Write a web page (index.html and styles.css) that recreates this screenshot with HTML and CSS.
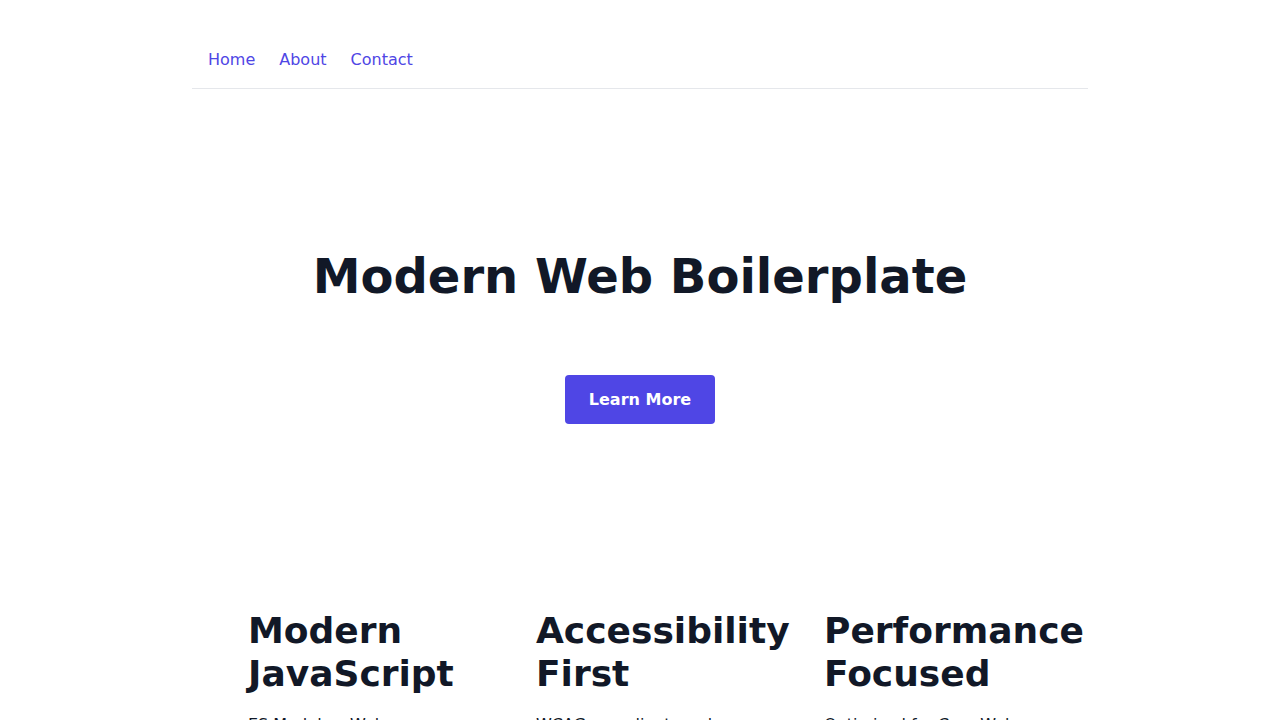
FILE: index.html
```html
<!DOCTYPE html>
<html lang="en">
<head>
<meta charset="utf-8">
<title>Modern Web Boilerplate</title>
<link rel="stylesheet" href="styles.css">
</head>
<body>
<div class="container">
  <header class="site-header">
    <nav class="nav">
      <a href="#">Home</a>
      <a href="#">About</a>
      <a href="#">Contact</a>
    </nav>
  </header>
  <main>
    <section class="hero">
      <h1>Modern Web Boilerplate</h1>
      <a class="btn" href="#">Learn More</a>
    </section>
    <section class="features">
      <article class="feature">
        <h2>Modern JavaScript</h2>
        <p>ES Modules, Web Components, and modern APIs</p>
      </article>
      <article class="feature">
        <h2>Accessibility First</h2>
        <p>WCAG compliant markup with semantic HTML</p>
      </article>
      <article class="feature">
        <h2>Performance Focused</h2>
        <p>Optimized for Core Web Vitals and fast loading</p>
      </article>
    </section>
  </main>
</div>
</body>
</html>
```
FILE: styles.css
```css
* { box-sizing: border-box; }
html, body { margin: 0; padding: 0; }
body {
  font-family: "DejaVu Sans", sans-serif;
  color: #111827;
  background: #fff;
  font-size: 16px;
  line-height: 1.5;
}
.container {
  max-width: 896px;
  margin: 0 auto;
}
.site-header {
  border-bottom: 1px solid #e5e7eb;
  padding: 48px 16px 16px;
}
.nav {
  display: flex;
  gap: 24px;
}
.nav a {
  color: #4f46e5;
  text-decoration: none;
  font-size: 16px;
  line-height: 24px;
}
.hero {
  text-align: center;
  padding: 159px 16px 0;
}
.hero h1 {
  margin: 0 0 69px;
  font-size: 48px;
  line-height: 57.6px;
  font-weight: 700;
  color: #111827;
}
.btn {
  display: inline-block;
  background: #4f46e5;
  color: #fff;
  font-weight: 700;
  text-decoration: none;
  padding: 12px 24px;
  line-height: 25px;
  border-radius: 4px;
}
.features {
  display: grid;
  grid-template-columns: repeat(3, 256px);
  gap: 32px;
  padding: 185px 0 48px 56px;
}
.feature h2 {
  margin: 0 0 18px;
  font-size: 36px;
  line-height: 43.2px;
  font-weight: 700;
  color: #111827;
}
.feature p {
  margin: 0;
  color: #111827;
  width: 220px;
}
```
